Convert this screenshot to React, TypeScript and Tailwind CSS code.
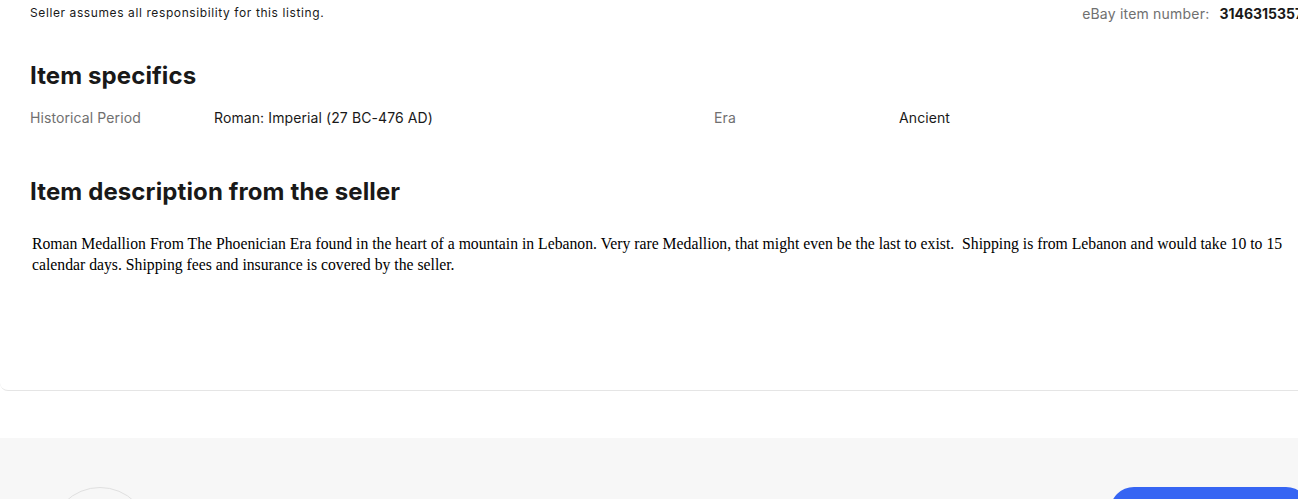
export default function App() {
  const sans = { fontFamily: "Inter, 'Open Sans', Arial, sans-serif" };
  return (
    <div className="w-[1298px] h-[499px] overflow-hidden bg-white" style={sans}>
      <div className="h-[391px] border-b border-[#e5e5e5] rounded-bl-[8px] overflow-hidden">
        <div className="flex items-center h-[26px] pl-[30px] text-[#191919] w-[1318px]">
          <span className="text-[12px] tracking-[0.6px] flex-none">Seller assumes all responsibility for this listing.</span>
          <span className="text-[14px] whitespace-nowrap flex-none ml-auto">
            <span className="text-[#707070] tracking-[0.2px]">eBay item number:</span>
            <span className="font-bold ml-[10px]">314631535731</span>
          </span>
        </div>
        <div className="pl-[30px] pt-[35px]">
          <h2 className="text-[24px] font-bold text-[#191919] leading-[30px] tracking-[0.1px]">Item specifics</h2>
          <div className="flex mt-[17px] text-[14px] leading-[20px] tracking-[0.1px]">
            <div className="w-[184px] text-[#707070]">Historical Period</div>
            <div className="w-[500px] text-[#191919]">Roman: Imperial (27 BC-476 AD)</div>
            <div className="w-[185px] text-[#707070]">Era</div>
            <div className="text-[#191919]">Ancient</div>
          </div>
          <h2 className="mt-[49px] text-[24px] font-bold text-[#191919] leading-[30px] tracking-[0.12px]">Item description from the seller</h2>
        </div>
        <div
          className="pl-[32px] pr-[12px] pt-[26px] text-[15.73px] leading-[21px] text-black"
          style={{ fontFamily: "'Liberation Serif', 'Times New Roman', serif" }}
        >
          Roman Medallion From The Phoenician Era found in the heart of a mountain in Lebanon. Very rare Medallion, that might even be the last to exist.&nbsp; Shipping is from Lebanon and would take 10 to 15 calendar days. Shipping fees and insurance is covered by the seller.
        </div>
      </div>
      <div className="mt-[47px] h-[61px] bg-[#f7f7f7] flex justify-between items-start pt-[49px] pl-[50px]">
        <div className="w-[100px] h-[100px] rounded-full border border-[#e0e0e0] flex-none"></div>
        <div className="w-[200px] h-[48px] rounded-[24px] bg-[#3665f3] flex-none -mr-[12px]"></div>
      </div>
    </div>
  );
}
